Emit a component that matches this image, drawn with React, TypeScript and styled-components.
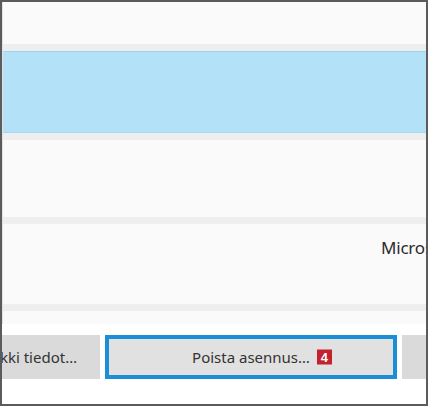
import styled, { createGlobalStyle } from "styled-components";

const GlobalStyle = createGlobalStyle`
  html, body {
    margin: 0;
    padding: 0;
    background: #ffffff;
  }
  body {
    font-family: "Noto Sans", "Open Sans", "Liberation Sans", sans-serif;
  }
`;

const Frame = styled.div`
  box-sizing: border-box;
  width: 428px;
  height: 406px;
  border: 2px solid #5b5b5b;
  overflow: hidden;
  display: flex;
  flex-direction: column;
  background: #ffffff;
`;

const List = styled.div`
  display: flex;
  flex-direction: column;
  gap: 7px;
  background: #eeeeee;
  border-left: 1px solid #e2e2e2;
`;

const Row = styled.div<{ $h: number; $selected?: boolean }>`
  height: ${(p) => p.$h}px;
  box-sizing: border-box;
  background: ${(p) => (p.$selected ? "#b3e2f8" : "#fafafa")};
  border-top: ${(p) => (p.$selected ? "1px solid #9fd4ef" : "none")};
  border-bottom: ${(p) => (p.$selected ? "1px solid #a6d8f1" : "none")};
  display: grid;
  grid-template-columns: 378px auto;
  align-items: start;
  white-space: nowrap;
`;

const Publisher = styled.span`
  grid-column: 2;
  padding-top: 12px;
  font-size: 17px;
  letter-spacing: -0.2px;
  color: #2b2b2b;
`;

const ButtonBar = styled.div`
  display: flex;
  gap: 5px;
  padding-top: 11px;
  margin-left: -53px;
`;

const Button = styled.div<{ $w: number; $focused?: boolean; $end?: boolean }>`
  flex: none;
  box-sizing: border-box;
  width: ${(p) => p.$w}px;
  height: 44px;
  padding-right: ${(p) => (p.$end ? "23px" : "0")};
  background: ${(p) => (p.$focused ? "#e1e1e1" : "#dadada")};
  border: ${(p) => (p.$focused ? "4px solid #1b8ed6" : "none")};
  display: flex;
  align-items: center;
  justify-content: ${(p) => (p.$end ? "flex-end" : "center")};
  font-size: 15px;
  color: #333333;
  white-space: nowrap;
`;

const Label = styled.span`
  position: relative;
`;

const Badge = styled.span`
  position: absolute;
  left: calc(100% + 7px);
  top: 50%;
  transform: translateY(-50%);
  width: 15px;
  height: 15px;
  background: #c4202e;
  color: #ffffff;
  font-family: "Liberation Sans", Arial, sans-serif;
  font-weight: bold;
  font-size: 13px;
  line-height: 15px;
  text-align: center;
`;

export default function App() {
  return (
    <>
      <GlobalStyle />
      <Frame>
        <List>
          <Row $h={42} />
          <Row $h={82} $selected />
          <Row $h={77} />
          <Row $h={80}>
            <Publisher>Microsoft Corporation</Publisher>
          </Row>
          <Row $h={13} />
        </List>
        <ButtonBar>
          <Button $w={151} $end>
            Kaikki tiedot…
          </Button>
          <Button $w={292} $focused>
            <Label>
              Poista asennus…
              <Badge>4</Badge>
            </Label>
          </Button>
          <Button $w={292}>Muuta…</Button>
        </ButtonBar>
      </Frame>
    </>
  );
}
